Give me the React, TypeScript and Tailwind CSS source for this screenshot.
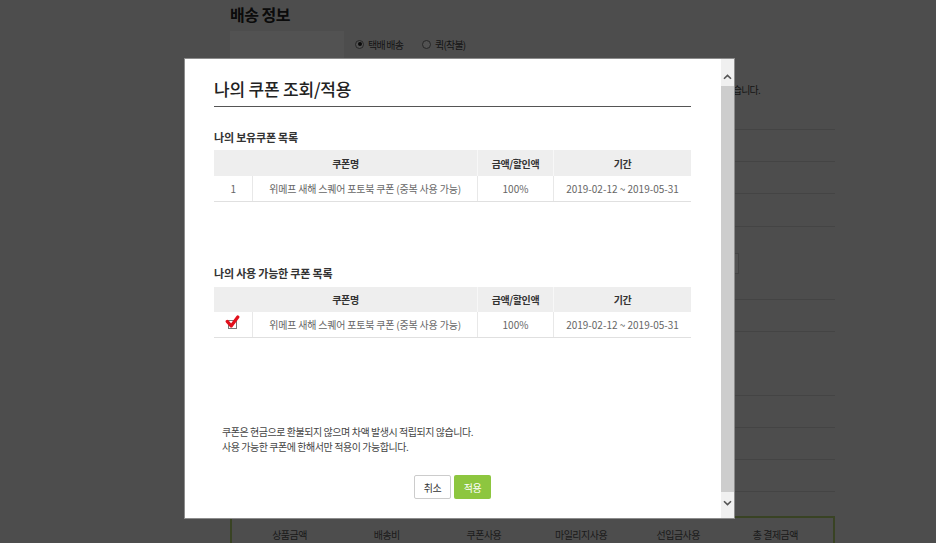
import React from "react";

type Coupon = { no: number | null; name: string; amount: string; period: string };

const owned: Coupon[] = [
  { no: 1, name: "위메프 새해 스퀘어 포토북 쿠폰 (중복 사용 가능)", amount: "100%", period: "2019-02-12 ~ 2019-05-31" },
];

const usable: Coupon[] = [
  { no: null, name: "위메프 새해 스퀘어 포토북 쿠폰 (중복 사용 가능)", amount: "100%", period: "2019-02-12 ~ 2019-05-31" },
];

function CheckedBox() {
  return (
    <svg width="15" height="15" viewBox="0 0 15 15">
      <rect x="3.5" y="5.5" width="8" height="8" fill="#fff" stroke="#777" strokeWidth="1" />
      <path d="M2.2 6.4 L6.2 11 L12.8 2" fill="none" stroke="#e2101c" strokeWidth="3.2" strokeLinecap="round" strokeLinejoin="round" />
    </svg>
  );
}

function CouponTable({ rows, selectable }: { rows: Coupon[]; selectable?: boolean }) {
  return (
    <div className="w-[477px] text-[10px] tracking-[-0.4px]">
      <div className={`grid grid-cols-[38px_225px_76px_138px] bg-[#eeeeee] font-semibold text-[#333] ${selectable ? "h-[25px]" : "h-[26px]"}`}>
        <div className="col-span-2 flex items-center justify-center">쿠폰명</div>
        <div className="flex items-center justify-center border-l border-[#f7f7f7]">금액/할인액</div>
        <div className="flex items-center justify-center border-l border-[#f7f7f7]">기간</div>
      </div>
      {rows.map((r, i) => (
        <div key={i} className="grid h-[26px] grid-cols-[38px_225px_76px_138px] border-b border-[#e0e0e0] text-[#666]">
          <div className="flex items-center justify-center">
            {selectable ? <span className="-mt-[5px] -ml-[1px] flex"><CheckedBox /></span> : r.no}
          </div>
          <div className="flex items-center justify-center border-l border-[#e8e8e8] tracking-[-0.2px]">{r.name}</div>
          <div className="flex items-center justify-center border-l border-[#e8e8e8] tracking-normal">{r.amount}</div>
          <div className="flex items-center justify-center border-l border-[#e8e8e8] tracking-normal">{r.period}</div>
        </div>
      ))}
    </div>
  );
}

function Chevron({ down }: { down?: boolean }) {
  return (
    <svg width="9" height="6" viewBox="0 0 9 6">
      <path d={down ? "M1 1.2 L4.5 4.6 L8 1.2" : "M1 4.8 L4.5 1.4 L8 4.8"} fill="none" stroke="#555" strokeWidth="1.6" />
    </svg>
  );
}

function Radio({ checked, label }: { checked?: boolean; label: string }) {
  return (
    <div className="flex items-center gap-[4px]">
      <span className="flex h-[9px] w-[9px] items-center justify-center rounded-full border border-[#777] bg-white">
        {checked && <span className="h-[4px] w-[4px] rounded-full bg-[#222]" />}
      </span>
      <span className="text-[10px] tracking-[-0.8px] text-[#444]">{label}</span>
    </div>
  );
}

const rowHeights = ["h-[32px]", "h-[32px]", "h-[33px]", "h-[73px]", "h-[32px]", "h-[64px]", "h-[32px]", "h-[32px]", "h-[32px]"];

export default function App() {
  return (
    <div className="relative h-[543px] overflow-hidden bg-[#f0f0f0] font-['Noto_Sans_CJK_KR','Liberation_Sans',sans-serif] text-[#333]">
      {/* page behind the popup */}
      <div className="ml-[230px] w-[605px]">
        <h2 className="h-[31px] pt-[4px] text-[16px] font-bold leading-[20px] tracking-[-0.5px] text-[#222]">배송 정보</h2>
        <div>
          <div className="flex h-[99px] border-b border-[#d2d2d2]">
            <div className="w-[114px] bg-white" />
            <div className="flex-1 pl-[11px] pt-[6px]">
              <div className="flex h-[14px] items-center gap-[19px]">
                <Radio checked label="택배 배송" />
                <Radio label="퀵(착불)" />
              </div>
              <div className="mt-[33px] w-[405px] text-right text-[10px] leading-[12px] tracking-[-0.8px] text-[#444]">
                택배 배송 시 결제 완료 후 2~3일 이내에 받아보실 수 있습니다.
              </div>
            </div>
          </div>
          {rowHeights.map((h, i) => (
            <div key={i} className={`flex ${h} border-b border-[#d2d2d2]`}>
              <div className="w-[114px] bg-white" />
              <div className="flex flex-1 items-center pl-[11px]">
                {i === 3 && <div className="ml-[264px] h-[21px] w-[120px] border border-[#cfcfcf] bg-white" />}
              </div>
            </div>
          ))}
        </div>
        <div className="mt-[24px] h-[40px] border-2 border-[#b0d070] px-[9px] pt-[11px]">
          <div className="grid grid-cols-6 text-center text-[10px] leading-[12px] tracking-[-0.5px] text-[#555]">
            <span>상품금액</span>
            <span>배송비</span>
            <span>쿠폰사용</span>
            <span>마일리지사용</span>
            <span>선입금사용</span>
            <span>총 결제금액</span>
          </div>
        </div>
      </div>

      {/* dim layer */}
      <div className="fixed inset-0 bg-black/[0.68]" />

      {/* coupon popup */}
      <div className="fixed left-[184px] top-[58px] flex h-[461px] w-[551px] border border-[#8c8c8c] bg-white">
        <div className="flex-1 pl-[29px]">
          <div className="w-[477px] border-b border-[#555] pb-[5px] pt-[18px]">
            <h1 className="text-[17px] font-medium leading-[24px] tracking-[-0.2px] text-[#222]">나의 쿠폰 조회/적용</h1>
          </div>

          <h3 className="mt-[22px] mb-[5px] text-[11px] font-semibold leading-[16px] tracking-[-0.2px] text-[#333]">나의 보유쿠폰 목록</h3>
          <CouponTable rows={owned} />

          <h3 className="mt-[63px] mb-[6px] text-[11px] font-semibold leading-[16px] tracking-[-0.2px] text-[#333]">나의 사용 가능한 쿠폰 목록</h3>
          <CouponTable rows={usable} selectable />

          <div className="mt-[87px] pl-[8px] text-[10px] leading-[14.5px] tracking-[-0.45px] text-[#444]">
            <p>쿠폰은 현금으로 환불되지 않으며 차액 발생시 적립되지 않습니다.</p>
            <p>사용 가능한 쿠폰에 한해서만 적용이 가능합니다.</p>
          </div>

          <div className="mt-[21px] flex w-[477px] justify-center gap-[3px]">
            <button className="h-[24px] w-[37px] rounded-[2px] border border-[#cccccc] bg-white text-[10px] tracking-[-0.5px] text-[#333]">취소</button>
            <button className="h-[24px] w-[37px] rounded-[2px] bg-[#8dc63f] text-[10px] tracking-[-0.5px] text-white">적용</button>
          </div>
        </div>

        {/* scrollbar */}
        <div className="flex w-[13px] flex-col bg-[#f0f0f0]">
          <div className="flex h-[27px] items-center justify-center pt-[8px]">
            <Chevron />
          </div>
          <div className="flex-1 bg-[#cdcdcd]" />
          <div className="flex h-[26px] items-start justify-center pt-[8px]">
            <Chevron down />
          </div>
        </div>
      </div>
    </div>
  );
}
